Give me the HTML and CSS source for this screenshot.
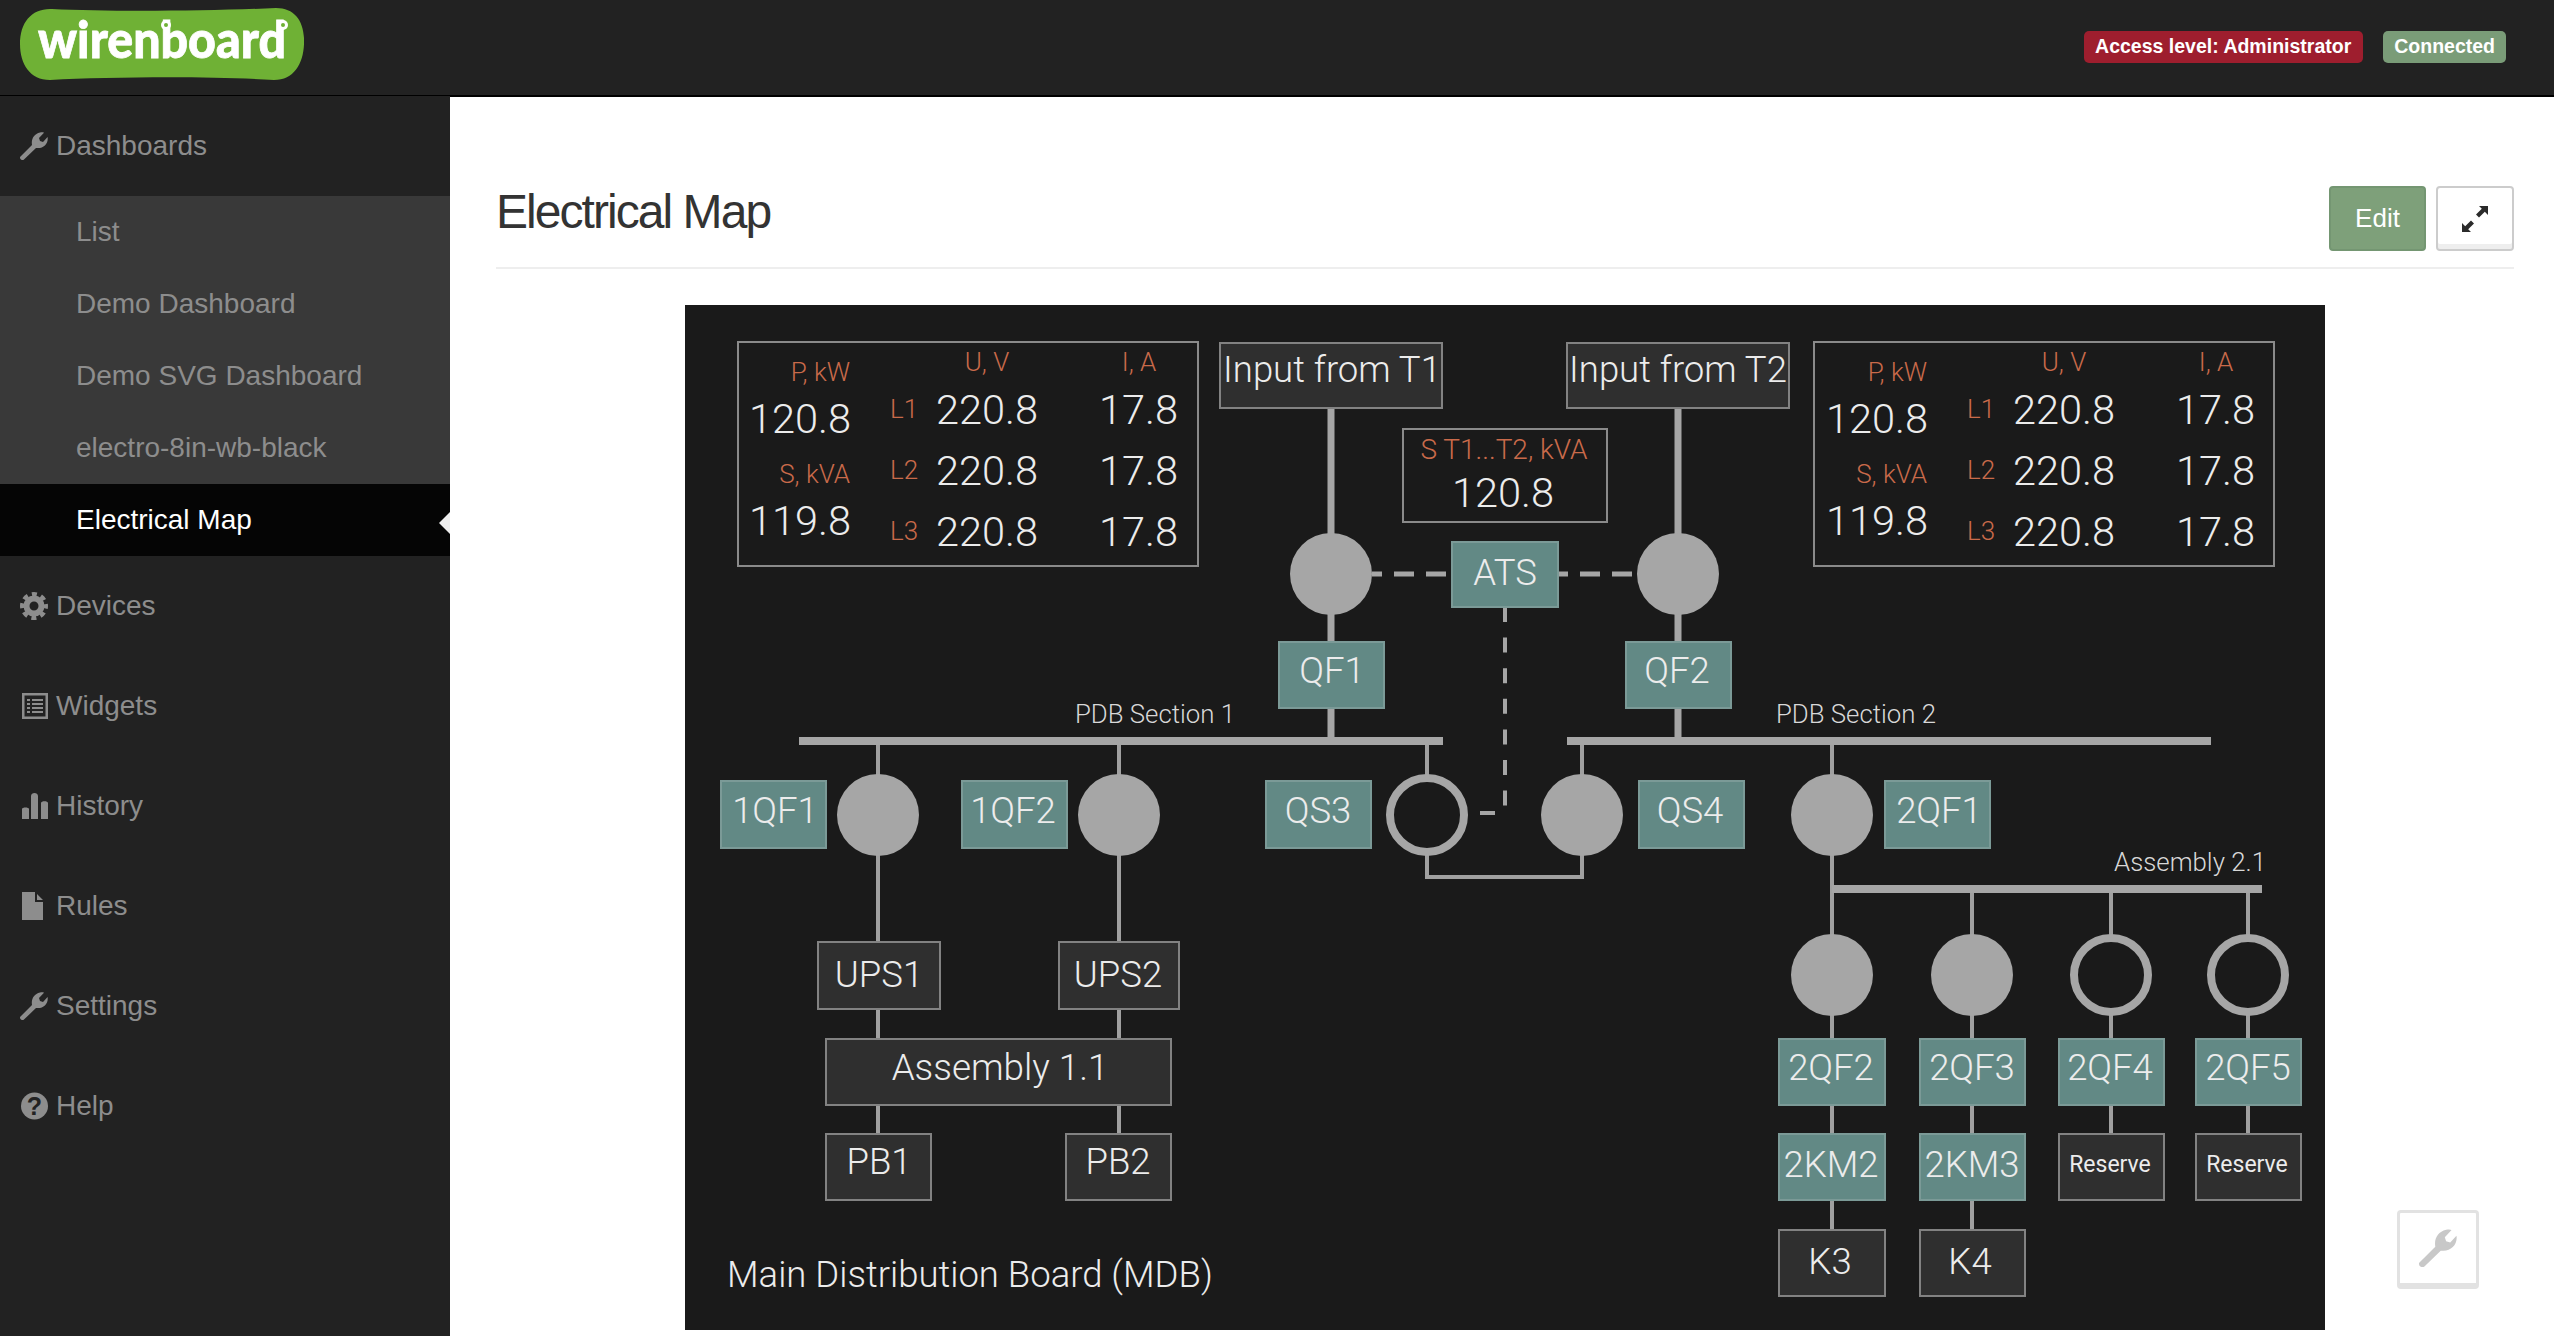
FILE: index.html
```html
<!DOCTYPE html>
<html lang="en">
<head>
<meta charset="utf-8">
<title>Electrical Map</title>
<link rel="stylesheet" href="styles.css">
</head>
<body>
<header class="topbar">
  <svg class="logo" viewBox="0 0 284 72" width="284" height="72" aria-label="wirenboard">
    <path class="logo-bg" d="M32 1 C90 4 190 3 256 0 C274 0 283 12 284 30 C285 52 276 72 254 72 C190 68 90 69 30 72 C10 72 0 56 0 36 C0 14 12 0 32 1 Z"/>
    <text class="logo-text" x="18" y="50" textLength="248" lengthAdjust="spacingAndGlyphs">wirenboard</text>
    <circle class="logo-hole" cx="146" cy="17" r="5"/>
    <circle class="logo-dot" cx="146" cy="17" r="2"/>
    <circle class="logo-hole" cx="263" cy="17" r="5"/>
    <circle class="logo-dot" cx="263" cy="17" r="2"/>
  </svg>
  <div class="badges">
    <span class="badge badge-red">Access level: Administrator</span>
    <span class="badge badge-green">Connected</span>
  </div>
</header>
<div class="layout">
  <nav class="sidebar">
    <a class="nav-item nav-first">
      <svg class="nav-icon" viewBox="0 0 28 28"><path d="M0 25 L12 13 C11 7 14 2 20 .6 C22 .2 23 .3 24 .8 L19 6 L20 9 L23 10 L27.6 5 C28.6 11 24 16 18 16 L16 16 L4 27.6 C3 28.6 1 28 .4 27 C0 26.4 0 25.6 0 25 Z"/></svg>
      <span>Dashboards</span>
    </a>
    <ul class="subnav">
      <li class="sub-item">List</li>
      <li class="sub-item">Demo Dashboard</li>
      <li class="sub-item">Demo SVG Dashboard</li>
      <li class="sub-item">electro-8in-wb-black</li>
      <li class="sub-item sub-active">Electrical Map<i class="notch"></i></li>
    </ul>
    <a class="nav-item">
      <svg class="nav-icon" viewBox="0 0 28 28"><circle class="cog-ring" cx="14" cy="14" r="7.500"/><circle class="cog-teeth" cx="14" cy="14" r="11.800"/></svg>
      <span>Devices</span>
    </a>
    <a class="nav-item">
      <svg class="nav-icon" viewBox="0 0 28 28"><path fill-rule="evenodd" d="M2 1 H28 V27 H2 Z M4.5 3.5 V24.5 H25.5 V3.5 Z M7 7 H10 V9 H7 Z M12 7 H23 V9 H12 Z M7 11 H10 V13 H7 Z M12 11 H23 V13 H12 Z M7 15 H10 V17 H7 Z M12 15 H23 V17 H12 Z M7 19 H10 V21 H7 Z M12 19 H23 V21 H12 Z"/></svg>
      <span>Widgets</span>
    </a>
    <a class="nav-item">
      <svg class="nav-icon" viewBox="0 0 28 28"><path d="M2 17 C2 15 9 15 9 17 V27 H2 Z M11 4 C11 0 18 0 18 4 V27 H11 Z M21 11 C21 8.500 28 8.500 28 11 V27 H21 Z"/></svg>
      <span>History</span>
    </a>
    <a class="nav-item">
      <svg class="nav-icon" viewBox="0 0 28 28"><path d="M2 0 H15 V10 H23 V28 H2 Z M17 2 L23 8 H17 Z"/></svg>
      <span>Rules</span>
    </a>
    <a class="nav-item">
      <svg class="nav-icon" viewBox="0 0 28 28"><path d="M0 25 L12 13 C11 7 14 2 20 .6 C22 .2 23 .3 24 .8 L19 6 L20 9 L23 10 L27.6 5 C28.6 11 24 16 18 16 L16 16 L4 27.6 C3 28.6 1 28 .4 27 C0 26.4 0 25.6 0 25 Z"/></svg>
      <span>Settings</span>
    </a>
    <a class="nav-item">
      <svg class="nav-icon" viewBox="0 0 28 28"><circle class="help-disc" cx="14.500" cy="14" r="13.500"/><text class="help-mark" x="14.500" y="23">?</text></svg>
      <span>Help</span>
    </a>
  </nav>
  <main class="main">
    <div class="page-head">
      <h1 class="page-title">Electrical Map</h1>
      <div class="page-actions">
        <button class="btn btn-edit">Edit</button>
        <button class="btn btn-expand">
          <svg viewBox="0 0 26 26" width="26" height="26"><path d="M17 0 H26 V9 L22.800 5.800 L17 11.600 L14 8.600 L19.800 2.800 Z M9 26 H0 V17 L3.200 20.200 L9 14.400 L12 17.400 L6.200 23.200 Z"/></svg>
        </button>
      </div>
    </div>
    <div class="diagram-wrap">
      <svg class="diagram" viewBox="685 305 1640 1025" width="1640" height="1025">
        <rect class="bg" x="685" y="305" width="1640" height="1025"/>

        <!-- wiring -->
        <path class="wire-thick" d="M1331 408 V737 M1678 408 V737"/>
        <path class="wire-dash-h" d="M1372 574 H1452 M1558 574 H1638"/>
        <path class="wire-dash-v" d="M1505 607 V807 M1480 813 H1497"/>
        <rect class="bus" x="799" y="737" width="644" height="8"/>
        <rect class="bus" x="1567" y="737" width="644" height="8"/>
        <path class="wire" d="M878 745 V1134 M1119 745 V1134 M1427 745 V877 H1582 V745 M1832 745 V1230 M1972 893 V1230 M2111 893 V1134 M2248 893 V1134"/>
        <rect class="bus" x="1832" y="885" width="430" height="8"/>

        <!-- breakers -->
        <circle class="dot" cx="1331" cy="574" r="41"/>
        <circle class="dot" cx="1678" cy="574" r="41"/>
        <circle class="dot" cx="878" cy="815" r="41"/>
        <circle class="dot" cx="1119" cy="815" r="41"/>
        <circle class="ring" cx="1427" cy="815" r="37"/>
        <circle class="dot" cx="1582" cy="815" r="41"/>
        <circle class="dot" cx="1832" cy="815" r="41"/>
        <circle class="dot" cx="1832" cy="975" r="41"/>
        <circle class="dot" cx="1972" cy="975" r="41"/>
        <circle class="ring" cx="2111" cy="975" r="37"/>
        <circle class="ring" cx="2248" cy="975" r="37"/>

        <!-- metering panels -->
        <rect class="panel" x="738" y="342" width="460" height="224"/>
        <text class="orange end" x="850" y="381">P, kW</text>
        <text class="value end" x="851" y="433">120.8</text>
        <text class="orange end" x="850" y="483">S, kVA</text>
        <text class="value end" x="851" y="535">119.8</text>
        <text class="orange mid" x="987" y="371">U, V</text>
        <text class="orange mid" x="1139" y="371">I, A</text>
        <text class="orange" x="890" y="418">L1</text>
        <text class="orange" x="890" y="479">L2</text>
        <text class="orange" x="890" y="540">L3</text>
        <text class="value end" x="1038" y="424">220.8</text>
        <text class="value end" x="1038" y="485">220.8</text>
        <text class="value end" x="1038" y="546">220.8</text>
        <text class="value end" x="1178" y="424">17.8</text>
        <text class="value end" x="1178" y="485">17.8</text>
        <text class="value end" x="1178" y="546">17.8</text>

        <rect class="panel" x="1814" y="342" width="460" height="224"/>
        <text class="orange end" x="1927" y="381">P, kW</text>
        <text class="value end" x="1928" y="433">120.8</text>
        <text class="orange end" x="1927" y="483">S, kVA</text>
        <text class="value end" x="1928" y="535">119.8</text>
        <text class="orange mid" x="2064" y="371">U, V</text>
        <text class="orange mid" x="2216" y="371">I, A</text>
        <text class="orange" x="1967" y="418">L1</text>
        <text class="orange" x="1967" y="479">L2</text>
        <text class="orange" x="1967" y="540">L3</text>
        <text class="value end" x="2115" y="424">220.8</text>
        <text class="value end" x="2115" y="485">220.8</text>
        <text class="value end" x="2115" y="546">220.8</text>
        <text class="value end" x="2255" y="424">17.8</text>
        <text class="value end" x="2255" y="485">17.8</text>
        <text class="value end" x="2255" y="546">17.8</text>

        <rect class="panel" x="1403" y="429" width="204" height="93"/>
        <text class="orange-big mid" x="1504" y="459">S T1...T2, kVA</text>
        <text class="value mid" x="1503" y="507">120.8</text>

        <!-- dark boxes -->
        <rect class="box" x="1220" y="343" width="222" height="65"/>
        <text class="label mid" x="1332" y="382">Input from T1</text>
        <rect class="box" x="1567" y="343" width="222" height="65"/>
        <text class="label mid" x="1678" y="382">Input from T2</text>
        <rect class="box" x="818" y="942" width="122" height="67"/>
        <text class="label mid" x="879" y="987">UPS1</text>
        <rect class="box" x="1059" y="942" width="120" height="67"/>
        <text class="label mid" x="1118" y="987">UPS2</text>
        <rect class="box" x="826" y="1039" width="345" height="66"/>
        <text class="label-wide mid" x="1000" y="1080">Assembly 1.1</text>
        <rect class="box" x="826" y="1134" width="105" height="66"/>
        <text class="label mid" x="879" y="1174">PB1</text>
        <rect class="box" x="1066" y="1134" width="105" height="66"/>
        <text class="label mid" x="1118" y="1174">PB2</text>
        <rect class="box" x="2059" y="1134" width="105" height="66"/>
        <text class="small mid" x="2110" y="1172">Reserve</text>
        <rect class="box" x="2196" y="1134" width="105" height="66"/>
        <text class="small mid" x="2247" y="1172">Reserve</text>
        <rect class="box" x="1779" y="1230" width="106" height="66"/>
        <text class="label mid" x="1830" y="1274">K3</text>
        <rect class="box" x="1920" y="1230" width="105" height="66"/>
        <text class="label mid" x="1970" y="1274">K4</text>

        <!-- teal boxes -->
        <rect class="tag" x="1279" y="642" width="105" height="66"/>
        <text class="label mid" x="1332" y="683">QF1</text>
        <rect class="tag" x="1626" y="642" width="105" height="66"/>
        <text class="label mid" x="1677" y="683">QF2</text>
        <rect class="tag" x="1452" y="542" width="106" height="65"/>
        <text class="label mid" x="1505" y="585">ATS</text>
        <rect class="tag" x="721" y="781" width="105" height="67"/>
        <text class="label mid" x="775" y="823">1QF1</text>
        <rect class="tag" x="962" y="781" width="105" height="67"/>
        <text class="label mid" x="1013" y="823">1QF2</text>
        <rect class="tag" x="1266" y="781" width="105" height="67"/>
        <text class="label mid" x="1318" y="823">QS3</text>
        <rect class="tag" x="1639" y="781" width="105" height="67"/>
        <text class="label mid" x="1690" y="823">QS4</text>
        <rect class="tag" x="1885" y="781" width="105" height="67"/>
        <text class="label mid" x="1939" y="823">2QF1</text>
        <rect class="tag" x="1779" y="1039" width="106" height="66"/>
        <text class="label mid" x="1831" y="1080">2QF2</text>
        <rect class="tag" x="1920" y="1039" width="105" height="66"/>
        <text class="label mid" x="1972" y="1080">2QF3</text>
        <rect class="tag" x="2059" y="1039" width="105" height="66"/>
        <text class="label mid" x="2110" y="1080">2QF4</text>
        <rect class="tag" x="2196" y="1039" width="105" height="66"/>
        <text class="label mid" x="2248" y="1080">2QF5</text>
        <rect class="tag" x="1779" y="1134" width="106" height="66"/>
        <text class="label mid" x="1831" y="1177">2KM2</text>
        <rect class="tag" x="1920" y="1134" width="105" height="66"/>
        <text class="label mid" x="1972" y="1177">2KM3</text>

        <!-- captions -->
        <text class="caption mid" x="1155" y="723">PDB Section 1</text>
        <text class="caption mid" x="1856" y="723">PDB Section 2</text>
        <text class="caption end" x="2266" y="871">Assembly 2.1</text>
        <text class="title-text" x="727" y="1287">Main Distribution Board (MDB)</text>
      </svg>
    </div>
    <button class="tool-btn" aria-label="Tools">
      <svg viewBox="0 0 28 28" width="38" height="38"><path d="M0 25 L12 13 C11 7 14 2 20 .6 C22 .2 23 .3 24 .8 L19 6 L20 9 L23 10 L27.6 5 C28.6 11 24 16 18 16 L16 16 L4 27.6 C3 28.6 1 28 .4 27 C0 26.4 0 25.6 0 25 Z"/></svg>
    </button>
  </main>
</div>
</body>
</html>
```

FILE: styles.css
```css
* { box-sizing: border-box; }
html, body { margin: 0; height: 100%; overflow: hidden; }
body {
  display: flex;
  flex-direction: column;
  font-family: "Liberation Sans", Arial, sans-serif;
  background: #fff;
  color: #333;
}

/* top bar */
.topbar {
  flex: none;
  height: 96px;
  background: #222;
  border-bottom: 1px solid #000;
  display: flex;
  align-items: flex-start;
  justify-content: space-between;
  padding: 8px 48px 0 20px;
}
.logo { display: block; }
.logo-bg { fill: #6fb135; }
.logo-text {
  font-family: Lato, "Open Sans", sans-serif;
  font-weight: 900;
  font-size: 52px;
  fill: #fff;
  stroke: #fff;
  stroke-width: 0.8px;
}
.logo-hole { fill: #fff; }
.logo-dot { fill: #6fb135; }
.badges { display: flex; gap: 20px; margin-top: 23px; }
.badge {
  height: 32px;
  line-height: 31px;
  padding: 0 12px 0 11px;
  border-radius: 5px;
  color: #fff;
  font-weight: 700;
  font-size: 19.5px;
}
.badge-red { background: #9e1e2e; }
.badge-green { background: #7a9c78; padding: 0 11px; }

/* layout */
.layout { flex: 1; display: flex; min-height: 0; }
.sidebar {
  flex: none;
  width: 450px;
  background: #222;
  padding-top: 1px;
  color: #8d8d8d;
  font-size: 28px;
}
.nav-item {
  display: flex;
  align-items: center;
  height: 100px;
  padding-left: 20px;
  gap: 8px;
}
.nav-first { height: 99px; padding-bottom: 2px; }
.nav-icon { width: 28px; height: 28px; fill: #8d8d8d; flex: none; }
.cog-ring { fill: none; stroke: #8d8d8d; stroke-width: 6; }
.cog-teeth { fill: none; stroke: #8d8d8d; stroke-width: 4.400; stroke-dasharray: 5 4.270; stroke-dashoffset: 2.500; }
.help-disc { fill: #8d8d8d; }
.help-mark { fill: #222; font-size: 25px; font-weight: 700; text-anchor: middle; }
.subnav { list-style: none; margin: 0; padding: 0; background: #393939; }
.sub-item {
  position: relative;
  height: 72px;
  line-height: 71px;
  padding-left: 76px;
}
.sub-active { background: #050505; color: #fff; }
.notch {
  position: absolute;
  right: 0;
  top: 28px;
  width: 0;
  height: 0;
  border-top: 11px solid transparent;
  border-bottom: 11px solid transparent;
  border-right: 11px solid #eee;
}

/* main */
.main {
  position: relative;
  flex: 1;
  min-width: 0;
  border-top: 1px solid #000;
  padding: 0 40px 0 46px;
}
.page-head {
  display: flex;
  justify-content: space-between;
  align-items: flex-start;
  margin-top: 89px;
  height: 83px;
  border-bottom: 2px solid #eee;
}
.page-title {
  margin: 0;
  font-size: 48px;
  line-height: 51px;
  font-weight: 400;
  letter-spacing: -1.950px;
  color: #333;
}
.page-actions { display: flex; gap: 10px; }
.btn {
  height: 65px;
  border-radius: 4px;
  font-family: inherit;
  padding: 0;
  display: flex;
  align-items: center;
  justify-content: center;
}
.btn-edit {
  width: 97px;
  background: #7ea07a;
  border: 2px solid #749672;
  color: #fff;
  font-size: 26px;
}
.btn-expand {
  width: 78px;
  background: #fff;
  border: 2px solid #ccc;
  box-shadow: inset 0 -5px 0 #eee;
}
.btn-expand svg { fill: #2b2b2b; }
.diagram-wrap { display: flex; justify-content: center; margin-top: 36px; }
.diagram { display: block; flex: none; }
.tool-btn {
  position: absolute;
  left: 1947px;
  top: 1113px;
  width: 82px;
  height: 79px;
  padding: 0;
  background: #fff;
  border: 3px solid #e2e2e2;
  border-bottom-width: 6px;
  border-radius: 4px;
  display: flex;
  align-items: center;
  justify-content: center;
}
.tool-btn svg { fill: #c8c8c8; }

/* diagram */
.bg { fill: #1a1a1a; }
.bus { fill: #a6a6a6; }
.wire-thick { fill: none; stroke: #a6a6a6; stroke-width: 7; }
.wire { fill: none; stroke: #a0a0a0; stroke-width: 4; }
.wire-dash-h { fill: none; stroke: #a6a6a6; stroke-width: 5; stroke-dasharray: 20 12; stroke-dashoffset: 10; }
.wire-dash-v { fill: none; stroke: #a6a6a6; stroke-width: 4; stroke-dasharray: 15 15.600; }
.dot { fill: #a6a6a6; }
.ring { fill: #1a1a1a; stroke: #a6a6a6; stroke-width: 8; }
.panel { fill: #1a1a1a; stroke: #8a8a8a; stroke-width: 2; }
.box { fill: #2f2f2f; stroke: #828282; stroke-width: 2; }
.tag { fill: #628985; stroke: #7b9a97; stroke-width: 2; }
.diagram text { font-family: Roboto, sans-serif; font-weight: 300; fill: #ececec; }
.diagram .orange { font-size: 26px; fill: #c96a4a; }
.diagram .orange-big { font-size: 28px; fill: #c96a4a; }
.diagram .value { font-size: 41.500px; }
.diagram .label { font-size: 36.500px; }
.diagram .label-wide { font-size: 36.800px; }
.diagram .small { font-size: 23px; font-weight: 400; }
.diagram .caption { font-size: 25.800px; fill: #d8d8d8; }
.diagram .title-text { font-size: 36.500px; }
.diagram .mid { text-anchor: middle; }
.diagram .end { text-anchor: end; }
```
